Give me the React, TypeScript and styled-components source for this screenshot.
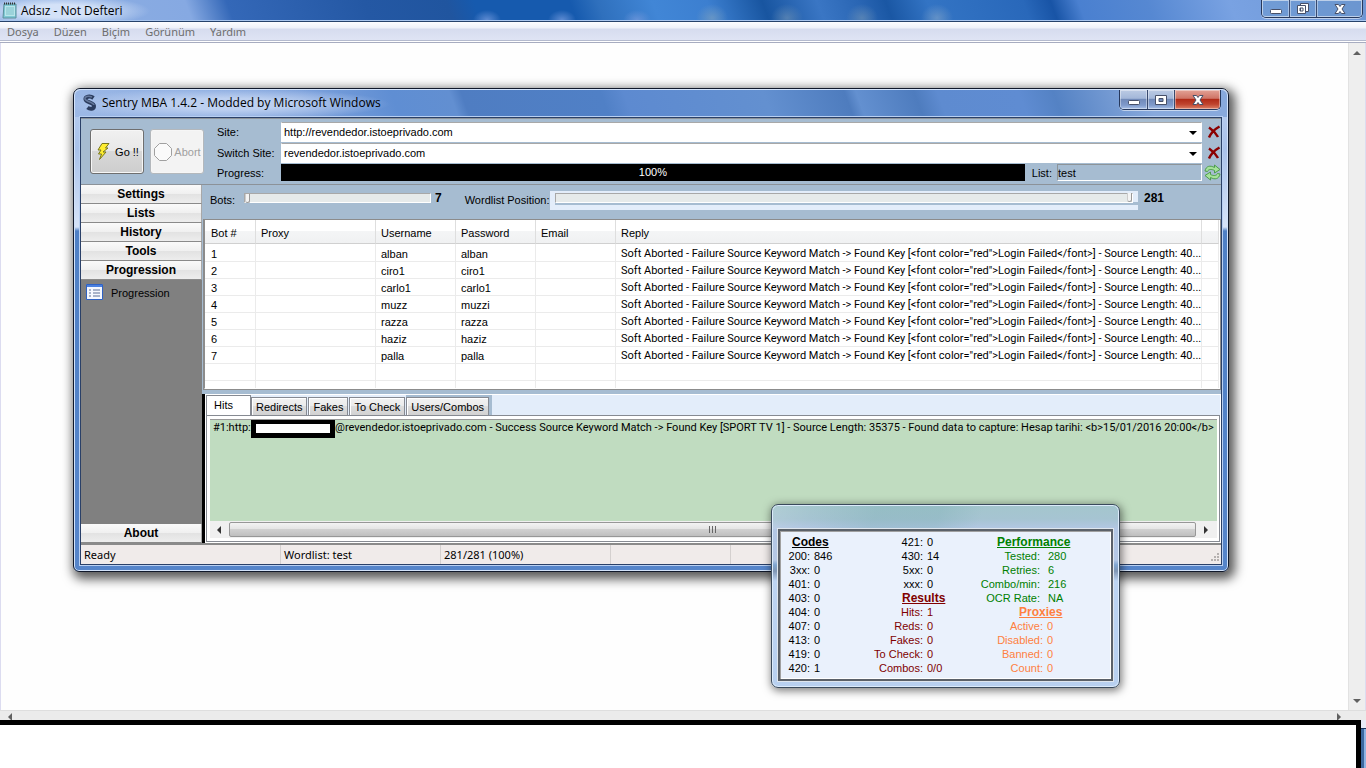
import React from "react";
import styled, { createGlobalStyle, css } from "styled-components";

const Global = createGlobalStyle`
  * { box-sizing: border-box; }
  html, body, #root { height: 100%; }
  body { margin: 0; overflow: hidden; background: #fff; color: #000;
    font: 11px/14px "Liberation Sans", Arial, sans-serif; }
  button, input, select { font: inherit; color: inherit; margin: 0; border-radius: 0; }
  h1, h2 { margin: 0; }
`;

const narrow = css`font-family: Roboto, "Liberation Sans", sans-serif;`;

const Desktop = styled.div`
  position: relative; height: 100vh; display: flex; flex-direction: column;
  background: #fff; overflow: hidden;
`;

const NotepadTitle = styled.header`
  display: flex; align-items: flex-start; height: 22px; flex: none; padding-left: 2px;
  border-bottom: 1px solid #27436b;
  box-shadow: inset 0 -1px #a9c6ee;
  background:
    radial-gradient(ellipse 90px 16px at 60px 11px, #d4e2f8 40%, #d4e2f800),
    radial-gradient(ellipse 14px 10px at 487px 20px, #6f97dbcc, #6f97db00),
    radial-gradient(ellipse 14px 10px at 562px 20px, #6f97dbcc, #6f97db00),
    radial-gradient(ellipse 14px 10px at 637px 20px, #6f97dbcc, #6f97db00),
    radial-gradient(ellipse 16px 14px at 712px 18px, #7a9fc0aa, #7a9fc000),
    radial-gradient(ellipse 16px 14px at 787px 18px, #6a8fb5aa, #6a8fb500),
    radial-gradient(ellipse 16px 14px at 862px 18px, #6a8fb5aa, #6a8fb500),
    radial-gradient(ellipse 16px 14px at 937px 18px, #7a9fc8aa, #7a9fc800),
    linear-gradient(70deg, #8fb0e2 0, #86a9e2 14%, #3468b8 17%, #2458a4 27%, #20559f 33%, #165aae 35%, #165aae 42%, #2f70bd 44%, #4186d6 48%, #3c7fd0 52%, #1855a0 56%, #3a76c4 60%, #2a66b4 63%, #1a57a4 65%, #3374c4 68%, #2968ba 75%, #1854a6 77%, #4a80d0 79%, #5688d2 84%, #79a2e2 90%, #6d96d4 100%);
`;

const TitleText = styled.h1`
  font-family: "Open Sans", "Noto Sans", sans-serif;
  flex: 1; font-size: 12px; font-weight: 400; line-height: 22px; margin-left: 4px;
`;

const Caption = styled.div<{ $glass?: boolean }>`
  display: flex; height: ${p => (p.$glass ? 18 : 20)}px; border: 1px solid #26385c; border-top: 0;
  border-radius: 0 0 5px 5px; overflow: hidden;
  box-shadow: inset 0 0 0 1px #ffffff66, 0 1px #ffffff88;
  margin-right: ${p => (p.$glass ? 3 : 0)}px;
`;

const CaptionButton = styled.button<{ $w: number; $close?: boolean; $glass?: boolean }>`
  width: ${p => p.$w}px; padding: 0; border: 0; display: grid; place-items: center;
  box-shadow: inset 0 0 0 1px #ffffff66;
  & + & { border-left: 1px solid #38496e; }
  background: ${p =>
    p.$glass ? "#6a97c866" :
    p.$close ? "linear-gradient(#e3a296 0, #cf7466 44%, #b02a17 48%, #c0442e 75%, #dc8168 100%)" :
    "linear-gradient(#bccbe4 0, #a3b7d9 44%, #7089b8 48%, #7f9acb 80%, #a9c1e8 100%)"};
`;

const MenuBar = styled.nav`
  display: flex; gap: 15px; flex: none; height: 21px; padding: 0 7px;
  border-bottom: 1px solid #a7acc0;
  background: linear-gradient(#fdfdff 0, #eef1f9 6px, #d6dcef 7px, #dfe4f4 18px, #b4bace 18px, #b4bace 19px, #fff 19px);
`;

const MenuItem = styled.button`
  font-family: "Noto Sans", "Open Sans", sans-serif;
  border: 0; padding: 0; background: none; font-size: 11px; line-height: 18px; color: #6d6d6d;
`;

const NotepadBody = styled.main`
  flex: 1; display: flex; min-height: 0; background: #fefefe; border-left: 1px solid #dcdcf0;
  border-right: 1px solid #dcdcf0;
`;
const Paper = styled.div`flex: 1;`;
const VerticalBar = styled.div`
  width: 17px; background: #eeeeee; border-left: 1px solid #e2e2e2; display: flex; flex-direction: column;
  justify-content: space-between; align-items: center; padding: 7px 0 6px;
`;
const HorizontalBar = styled.div`
  flex: none; height: 10px; background: #ebebeb; border-top: 1px solid #dedede;
  display: flex; justify-content: space-between; padding: 2px 24px 0 7px; overflow: hidden;
`;
const Footer = styled.footer`display: flex; flex: none; height: 48px; background: #e8ebf7;`;
const Blank = styled.div`flex: 1; border: solid #000; border-width: 5px 5px 0 0; background: #fff;`;
const FooterEdge = styled.div`
  width: 5px; margin-top: 8px; border-top: 1px solid #16305a;
  background: linear-gradient(90deg, #3d699f 60%, #8db4e4 60%);
`;

const Window = styled.section`
  position: absolute; left: 73px; right: 137px; top: 88px; height: 484px;
  display: flex; flex-direction: column; padding: 0 6px 6px;
  border: 1px solid #10182a; border-radius: 7px 7px 6px 6px;
  box-shadow: inset 0 0 0 1px #d3e3fa, 3px 4px 11px 3px #000000a8;
  background: linear-gradient(#bcd0f0 0, #a9c2ea 60px, #d6e3f8 138px, #4f80c5 142px, #5685ca 100%);
`;

const WindowTitle = styled.header`
  display: flex; align-items: flex-start; height: 28px; flex: none; margin: 0 -5px 0; padding: 0 6px 0 6px;
  border-radius: 6px 6px 0 0; border-top: 1px solid #d3e3fa;
  background:
    radial-gradient(ellipse 165px 16px at 150px 14px, #bdd0f0 35%, #bdd0f000),
    linear-gradient(70deg, #9db9e6 0, #7ea2dc 20%, #5f8ed3 28%, #628fd1 33%, #4f7dc2 34%, #5080c6 46%, #5d8ad0 48%, #6390d0 60%, #4e7cbe 67%, #6390d0 68%, #4e7cbe 73%, #5e8bd0 75%, #5f8cd2 82%, #5482c4 85%, #88a9dc 93%, #88a9dc 100%);
  & > svg { margin-top: 4px; }
  h1 { line-height: 26px; margin-left: 3px; }
`;

const Client = styled.div`
  flex: 1; min-height: 0; display: flex; flex-direction: column; border: 1px solid #2a4068; background: #a6bcd1;
  box-shadow: 0 0 0 1px #b9d0f2;
`;

const TopBar = styled.div`
  display: flex; flex: none; height: 67px; border-bottom: 1px solid #8c9298; border-top: 1px solid #8c9298; padding-left: 9px;
`;
const BigButton = styled.button`
  width: 54px; height: 45px; margin: 10px 6px 0 0; padding: 0; flex: none;
  display: flex; align-items: center; justify-content: center; gap: 3px; white-space: nowrap;
  border: 1px solid #6f6f6f; border-radius: 3px; box-shadow: inset 0 0 0 1px #f6f6f6;
  background: linear-gradient(#f0f0f0 0, #e8e8e8 48%, #d8d8d8 50%, #cdcdcd);
  &:disabled { color: #a0a0a0; border-color: #b4b8bc; background: #f3f3f3; gap: 1px; }
`;
const Fields = styled.div`
  flex: 1; margin: 2px 0 0 7px; display: grid; grid-template-columns: 64px 1fr 19px;
  grid-template-rows: 21px 21px 19px; align-items: center;
`;
const Combo = styled.div`
  position: relative; height: 20px;
  & > svg { position: absolute; right: 5px; top: 8px; pointer-events: none; }
`;
const Select = styled.select`
  appearance: none; width: 100%; height: 20px; border: 1px solid #fff; border-top-color: #a8a8a8; background: #fff;
  padding: 0 2px; display: block;
`;
const IconButton = styled.button`
  border: 0; background: none; padding: 0; width: 19px; height: 18px; display: grid; place-items: center end;
`;
const ProgressRow = styled.div`display: flex; align-items: center; height: 17px;`;
const Progress = styled.div`
  flex: 1; background: #000; color: #fff; text-align: center; height: 17px; line-height: 17px;
`;
const ListLabel = styled.label`padding: 0 5px 0 7px;`;
const ListInput = styled.input`
  width: 145px; height: 17px; border: 1px solid #fff; border-top-color: #8d9499; border-left-color: #8d9499;
  background: #a6bcd1; padding: 0;
`;

const Middle = styled.div`flex: 1; min-height: 0; display: flex; border-bottom: 2px solid #8a8a8a;`;
const Sidebar = styled.nav`width: 121px; flex: none; background: #808080; display: flex; flex-direction: column;`;
const SideButton = styled.button`
  height: 19px; flex: none; padding: 0; border: 0; border-bottom: 1px solid #8a8a8a; border-right: 1px solid #a8a8a8;
  font-size: 12px; font-weight: 700;
  background: linear-gradient(#fafafa 0, #f0f0f0 48%, #e2e2e2 50%, #ededed);
`;
const SideLink = styled.a`
  flex: 1; display: flex; align-items: flex-start; gap: 8px; padding: 4px 5px; color: #000; text-decoration: none;
  span { margin-top: 2px; }
`;
const Right = styled.div`flex: 1; min-width: 0; display: flex; flex-direction: column;`;
const Controls = styled.div`
  flex: none; height: 34px; display: flex; align-items: center; padding: 0 57px 4px 8px; white-space: nowrap;
  strong { font-size: 12px; line-height: 14px; padding-bottom: 4px; }
`;
const BotsLabel = styled.label`width: 34px;`;
const PositionLabel = styled.label`width: 85px; margin-left: 23px;`;
const Range = styled.input<{ $end?: boolean }>`
  appearance: none; height: 10px; width: ${p => (p.$end ? "100%" : "187px")}; background: #e6eaea;
  margin-bottom: ${p => (p.$end ? 0 : 4)}px; margin-right: ${p => (p.$end ? 0 : 4)}px;
  border: 1px solid #a8a8a8; border-right-color: #fff; border-bottom-color: #fff;
  &::-webkit-slider-thumb {
    appearance: none; width: 5px; height: 9px; background: #f4f4f4; border: 1px solid #999; border-top: 0;
    border-left-color: #ccc; border-radius: 0 0 3px 3px;
  }
`;
const PositionBox = styled.div`
  flex: 1; height: 19px; margin-right: 6px; padding: 2px 5px 0; display: flex; align-items: flex-start;
  background: linear-gradient(#a6bcd1, #a6bcd1) 5px 11px / 100% 3px no-repeat, #e3edfa;
`;

const ListFrame = styled.div`
  flex: none; height: 171px; border: 2px solid #fff; border-top: 1px solid #777; border-left-color: #8c8c8c;
  background: #fff; outline: 1px solid #8c8c8c; outline-offset: -1px; margin-left: 1px; overflow: hidden;
`;
const Table = styled.table`
  width: 100%; border-collapse: separate; border-spacing: 0; table-layout: fixed;
  th { height: 24px; padding: 3px 5px 0; text-align: left; font-weight: 400; border-right: 1px solid #dedede;
    border-bottom: 1px solid #d0d0d0; background: linear-gradient(#fff 0, #fff 48%, #f4f5f6 50%, #f0f1f2); }
  td { height: 17px; padding: 2px 5px 0; line-height: 14px; white-space: nowrap; overflow: hidden;
    border-right: 1px solid #ebebeb; border-bottom: 1px solid #ebebeb; }
  th:first-child, td:first-child { padding-left: 6px; }
  tbody tr:first-child td { height: 18px; padding-top: 3px; }
  td:nth-child(6) { ${narrow} }
`;

const Bottom = styled.div`
  flex: 1; min-height: 0; margin-top: 4px; border-left: 3px solid #000; display: flex; flex-direction: column;
  padding: 1px; background: #fff;
`;
const Tabs = styled.div`
  display: flex; align-items: flex-end; height: 20px; flex: none;
  background: linear-gradient(90deg, #e3edfa 200px, #a6bcd1 200px, #a6bcd1 286px, #e3edfa 286px);
`;
const Tab = styled.button<{ $active?: boolean }>`
  height: 18px; padding: 0 4px; border: 1px solid #868a92; border-bottom: 0; margin-right: 1px; white-space: nowrap;
  box-shadow: inset 1px 1px #fff;
  background: linear-gradient(#f2f2f2 0, #ebebeb 48%, #dddddd 50%, #d2d2d2);
  ${p => p.$active && css`
    height: 20px; width: 45px; text-align: left; padding: 0 7px 2px; background: #fff; margin: 0;
  `}
`;
const Pane = styled.div`
  flex: 1; min-height: 0; border: 1px solid #868a92; padding: 3px 2px 3px 3px; display: flex; flex-direction: column;
`;
const Hits = styled.div`
  ${narrow} flex: 1; background: #c0dcc0; border-top: 1px solid #999; padding: 0 4px 0 3px; display: flex; align-items: flex-start;
  white-space: nowrap; overflow: hidden; line-height: 15px;
`;
const Redaction = styled.span`
  flex: none; width: 84px; height: 18px; border: solid #000; border-width: 4px 5px 5px; background: #fff;
`;
const HitPrefix = styled.span`width: 38px; flex: none;`;
const ScrollRow = styled.div`
  flex: none; height: 17px; background: #f0f0f0; display: flex; align-items: center; padding: 0 8px 0 6px; gap: 7px;
`;
const Thumb = styled.div`
  flex: 1; height: 15px; border: 1px solid #979797; border-radius: 2px; display: grid; place-items: center;
  background: linear-gradient(#f3f3f3 0, #e4e4e4 48%, #d0d0d0 50%, #bfbfbf);
`;

const Status = styled.footer`
  font-family: "Noto Sans", sans-serif; flex: none; height: 19px; display: flex; background: #f0ebea; line-height: 19px; position: relative;
  & > svg { position: absolute; right: 1px; bottom: 1px; }
`;
const StatusCell = styled.span<{ $w: number }>`
  width: ${p => p.$w}px; padding: 0 3px; border-right: 1px solid #d4d0cf;
`;

const Popup = styled.section`
  position: absolute; right: 246px; top: 504px; width: 349px; height: 184px; padding: 24px 6px 6px;
  border: 1px solid #3a4a5c; border-radius: 7px;
  box-shadow: inset 0 0 0 1px #dcebfb, 1px 2px 8px 1px #00000080;
  background: linear-gradient(110deg, #ffffff22, #ffffff00 12%, #6fa7ac44 30%, #6fa7ac44 48%, #6fa7ac00 60%) 0 0 / 100% 24px no-repeat,
    linear-gradient(#a4c6cd 0, #a6c4d2 14px, #b3c7e4 24px, #b5c8e6 55px, #7fa5d0 60px, #8096b4 66px, #bdd4f2 76px, #b8d0f0);
`;
const Stats = styled.div`
  height: 100%; border: 2px solid #5b6169; background: #eaf1fc; outline: 1px solid #dfe6ee;
  box-shadow: inset 1px 1px #a0a0a0, inset -1px -1px #fff;
  display: grid; grid-template-columns: 86px 91px 1fr; padding: 4px 0 0 9px;
`;
const StatColumn = styled.div``;
const Group = styled.div<{ $color?: string; $left?: number; $gap?: number }>`
  color: ${p => p.$color ?? "#000"};
  display: grid; grid-template-columns: ${p => p.$left ?? 0}px auto; column-gap: ${p => p.$gap ?? 4}px; grid-auto-rows: 14px;
`;
const GroupTitle = styled.h2<{ $indent: number }>`
  grid-column: 1 / -1; font-size: 12px; line-height: 14px; font-weight: 700; text-decoration: underline;
  padding-left: ${p => p.$indent}px;
`;
const Key = styled.span`justify-self: end; white-space: nowrap;`;

const Arrow = ({ dir, fill = "#606060" }: { dir: "left" | "right" | "up" | "down"; fill?: string }) => {
  const d = { left: "M5 0v8L1 4z", right: "M1 0v8l4-4z", up: "M0 5h8L4 1z", down: "M0 1h8L4 5z" }[dir];
  const tall = dir === "left" || dir === "right";
  return <svg width={tall ? 6 : 8} height={tall ? 8 : 6} aria-hidden="true"><path d={d} fill={fill} /></svg>;
};

const MinGlyph = () => (
  <svg width="14" height="12" aria-hidden="true"><rect x="1.5" y="6.5" width="11" height="4" rx="1" fill="#fff" stroke="#475069" /></svg>
);
const MaxGlyph = () => (
  <svg width="14" height="12" aria-hidden="true"><path d="M1.500 1.500h11v9h-11zM5 4.500h4v3H5z" fill="#fff" fillRule="evenodd" stroke="#475069" /></svg>
);
const RestoreGlyph = () => (
  <svg width="14" height="13" aria-hidden="true">
    <path d="M4.500 1.500h8v8h-8z" fill="#fff" stroke="#475069" />
    <path d="M1.500 3.500h8v8h-8zM4 6h3v3H4z" fill="#fff" fillRule="evenodd" stroke="#475069" />
  </svg>
);
const CloseGlyph = () => (
  <svg width="14" height="12" aria-hidden="true">
    <path d="M2 1.500h3.500L7 3.500l1.500-2H12L9 6l3 4.500H8.500L7 8.500l-1.500 2H2L5 6z" fill="#fff" stroke="#475069" />
  </svg>
);
const CrossIcon = () => (
  <svg width="14" height="14" aria-hidden="true">
    <path d="M2 2.500c3 2 7 6 9 9.500M12.500 1.500C8 4 4 8 2 12.500" fill="none" stroke="#8b0000" strokeWidth="2.500" />
  </svg>
);
const RefreshIcon = () => (
  <svg width="17" height="17" viewBox="0 0 17 17" aria-hidden="true">
    <path d="M1 7C2 2 6 1 10.500 3.500V1L16 5.500 10.500 9V6.500C7.500 5 4.500 5 3.500 7.500z" fill="#a5e29a" stroke="#4d9d4b" />
    <path d="M16 10c-1 5-5 6-9.500 3.500V16L1 11.500 6.500 8v2.500c3 1.500 6 1.500 7-1z" fill="#a5e29a" stroke="#4d9d4b" />
  </svg>
);

const columns = [51, 120, 80, 80, 80, 586];
const reply = 'Soft Aborted - Failure Source Keyword Match -> Found Key [<font color="red">Login Failed</font>] - Source Length: 40...';
const bots = [
  ["alban", "alban"], ["ciro1", "ciro1"], ["carlo1", "carlo1"], ["muzz", "muzzi"],
  ["razza", "razza"], ["haziz", "haziz"], ["palla", "palla"],
];

const Pairs = ({ rows }: { rows: [string, string][] }) => (
  <>{rows.map(([k, v]) => <React.Fragment key={k}><Key>{k}:</Key><span>{v}</span></React.Fragment>)}</>
);

const WindowButtons = ({ glass }: { glass?: boolean }) => (
  <Caption $glass={glass}>
    <CaptionButton $glass={glass} $w={27} aria-label="Minimize"><MinGlyph /></CaptionButton>
    <CaptionButton $glass={glass} $w={27} aria-label="Maximize">{glass ? <RestoreGlyph /> : <MaxGlyph />}</CaptionButton>
    <CaptionButton $glass={glass} $w={46} $close aria-label="Close"><CloseGlyph /></CaptionButton>
  </Caption>
);

export default function App() {
  return (
    <Desktop>
      <Global />
      <NotepadTitle>
        <svg width="15" height="19" aria-hidden="true">
          <path d="M2 4h12v14H1z" fill="#7fc9d4" stroke="#5c8f9c" />
          <path d="M3 6h10v10H3z" fill="#b9e6ea" />
          <path d="M4 8h8M4 10h8M4 12h8M4 14h8" stroke="#7dbfca" />
          <path d="M2 3.500h12" stroke="#333" strokeWidth="2" strokeDasharray="1 1" />
        </svg>
        <TitleText>Adsız - Not Defteri</TitleText>
        <WindowButtons glass />
      </NotepadTitle>
      <MenuBar>
        {["Dosya", "Düzen", "Biçim", "Görünüm", "Yardım"].map(m => <MenuItem key={m}>{m}</MenuItem>)}
      </MenuBar>
      <NotepadBody>
        <Paper />
        <VerticalBar><Arrow dir="up" /><Arrow dir="down" /></VerticalBar>
      </NotepadBody>
      <HorizontalBar><Arrow dir="left" /><Arrow dir="right" /></HorizontalBar>
      <Footer><Blank /><FooterEdge /></Footer>

      <Window>
        <WindowTitle>
          <svg width="18" height="18" viewBox="0 0 18 18" aria-hidden="true">
            <path d="M12.500 4C9 1.500 4 2.500 4.500 5.500S13 8.500 13 12 9 15.500 6.500 13.500" fill="none" stroke="#2b3c5e" strokeWidth="4" />
            <path d="M11 3C7 1.500 3.500 2.500 4 5s8.500 3 9 6" fill="none" stroke="#64789c" strokeWidth="1.500" />
          </svg>
          <TitleText>Sentry MBA 1.4.2 - Modded by Microsoft Windows</TitleText>
          <WindowButtons />
        </WindowTitle>
        <Client>
          <TopBar>
            <BigButton>
              <svg width="17" height="17" aria-hidden="true">
                <path d="M7 .5h7L10.500 5H13l-5 4h3L4.500 16.500 6.500 11H3.500L6 7H3z" fill="#ffee30" stroke="#77761a" />
              </svg>
              Go !!
            </BigButton>
            <BigButton disabled>
              <svg width="20" height="20" aria-hidden="true">
                <path d="M6.500 1.500h7l5 5v7l-5 5h-7l-5-5v-7z" fill="#fafafa" stroke="#a0a0a0" />
              </svg>
              Abort
            </BigButton>
            <Fields>
              <label htmlFor="site">Site:</label>
              <Combo>
                <Select id="site"><option>http://revendedor.istoeprivado.com</option></Select>
                <Arrow dir="down" fill="#000" />
              </Combo>
              <IconButton aria-label="Clear site"><CrossIcon /></IconButton>
              <label htmlFor="switch">Switch Site:</label>
              <Combo>
                <Select id="switch"><option>revendedor.istoeprivado.com</option></Select>
                <Arrow dir="down" fill="#000" />
              </Combo>
              <IconButton aria-label="Clear switch site"><CrossIcon /></IconButton>
              <span>Progress:</span>
              <ProgressRow>
                <Progress role="progressbar" aria-valuenow={100}>100%</Progress>
                <ListLabel htmlFor="list">List:</ListLabel>
                <ListInput id="list" defaultValue="test" />
              </ProgressRow>
              <IconButton aria-label="Reload list"><RefreshIcon /></IconButton>
            </Fields>
          </TopBar>
          <Middle>
            <Sidebar>
              {["Settings", "Lists", "History", "Tools", "Progression"].map(s => <SideButton key={s}>{s}</SideButton>)}
              <SideLink href="#progression">
                <svg width="17" height="16" aria-hidden="true">
                  <path d="M.5.500h16v15H.5z" fill="#f5f8ff" stroke="#2f62c4" />
                  <path d="M1 2h15" stroke="#4a80e0" strokeWidth="2" />
                  <path d="M3 6h2M3 9h2M3 12h2M7 6h7M7 9h7M7 12h7" stroke="#5d6f96" />
                </svg>
                <span>Progression</span>
              </SideLink>
              <SideButton>About</SideButton>
            </Sidebar>
            <Right>
              <Controls>
                <BotsLabel htmlFor="bots">Bots:</BotsLabel>
                <Range id="bots" type="range" min="0" max="100" defaultValue="0" />
                <strong>7</strong>
                <PositionLabel htmlFor="position">Wordlist Position:</PositionLabel>
                <PositionBox>
                  <Range $end id="position" type="range" min="0" max="281" defaultValue="281" />
                </PositionBox>
                <strong>281</strong>
              </Controls>
              <ListFrame>
                <Table>
                  <colgroup>{columns.map((w, i) => <col key={i} style={{ width: w }} />)}<col /></colgroup>
                  <thead>
                    <tr>{["Bot #", "Proxy", "Username", "Password", "Email", "Reply", ""].map((h, i) => <th key={i}>{h}</th>)}</tr>
                  </thead>
                  <tbody>
                    {bots.map(([user, pass], i) => (
                      <tr key={user}><td>{i + 1}</td><td /><td>{user}</td><td>{pass}</td><td /><td>{reply}</td><td /></tr>
                    ))}
                    <tr>{columns.map((_, i) => <td key={i} />)}<td /></tr>
                    <tr>{columns.map((_, i) => <td key={i} />)}<td /></tr>
                  </tbody>
                </Table>
              </ListFrame>
              <Bottom>
                <Tabs>
                  <Tab $active>Hits</Tab>
                  {["Redirects", "Fakes", "To Check", "Users/Combos"].map(t => <Tab key={t}>{t}</Tab>)}
                </Tabs>
                <Pane>
                  <Hits>
                    <HitPrefix>#1:http:</HitPrefix><Redaction />
                    <span>@revendedor.istoeprivado.com - Success Source Keyword Match -&gt; Found Key [SPORT TV 1] - Source Length: 35375 - Found data to capture: Hesap tarihi: &lt;b&gt;15/01/2016 20:00&lt;/b&gt;</span>
                  </Hits>
                  <ScrollRow>
                    <Arrow dir="left" fill="#333" />
                    <Thumb><svg width="9" height="7" aria-hidden="true"><path d="M1.500 0v7M4.500 0v7M7.500 0v7" stroke="#666" /></svg></Thumb>
                    <Arrow dir="right" fill="#333" />
                  </ScrollRow>
                </Pane>
              </Bottom>
            </Right>
          </Middle>
          <Status>
            <StatusCell $w={200}>Ready</StatusCell>
            <StatusCell $w={160}>Wordlist: test</StatusCell>
            <StatusCell $w={170}>281/281 (100%)</StatusCell>
            <StatusCell $w={120} />
            <svg width="11" height="11" aria-hidden="true">
              <path d="M8 2h2M5 5h2M8 5h2M2 8h2M5 8h2M8 8h2" stroke="#b5b0af" strokeWidth="2" />
            </svg>
          </Status>
        </Client>
      </Window>

      <Popup>
        <Stats>
          <StatColumn>
            <Group $left={21}>
              <GroupTitle $indent={3}>Codes</GroupTitle>
              <Pairs rows={[["200", "846"], ["3xx", "0"], ["401", "0"], ["403", "0"], ["404", "0"], ["407", "0"], ["413", "0"], ["419", "0"], ["420", "1"]]} />
            </Group>
          </StatColumn>
          <StatColumn>
            <Group $left={48}>
              <Pairs rows={[["421", "0"], ["430", "14"], ["5xx", "0"], ["xxx", "0"]]} />
            </Group>
            <Group $color="#800000" $left={48}>
              <GroupTitle $indent={27}>Results</GroupTitle>
              <Pairs rows={[["Hits", "1"], ["Reds", "0"], ["Fakes", "0"], ["To Check", "0"], ["Combos", "0/0"]]} />
            </Group>
          </StatColumn>
          <StatColumn>
            <Group $color="#008000" $left={74} $gap={8}>
              <GroupTitle $indent={31}>Performance</GroupTitle>
              <Pairs rows={[["Tested", "280"], ["Retries", "6"], ["Combo/min", "216"], ["OCR Rate", "NA"]]} />
            </Group>
            <Group $color="#ff8040" $left={77}>
              <GroupTitle $indent={53}>Proxies</GroupTitle>
              <Pairs rows={[["Active", "0"], ["Disabled", "0"], ["Banned", "0"], ["Count", "0"]]} />
            </Group>
          </StatColumn>
        </Stats>
      </Popup>
    </Desktop>
  );
}
